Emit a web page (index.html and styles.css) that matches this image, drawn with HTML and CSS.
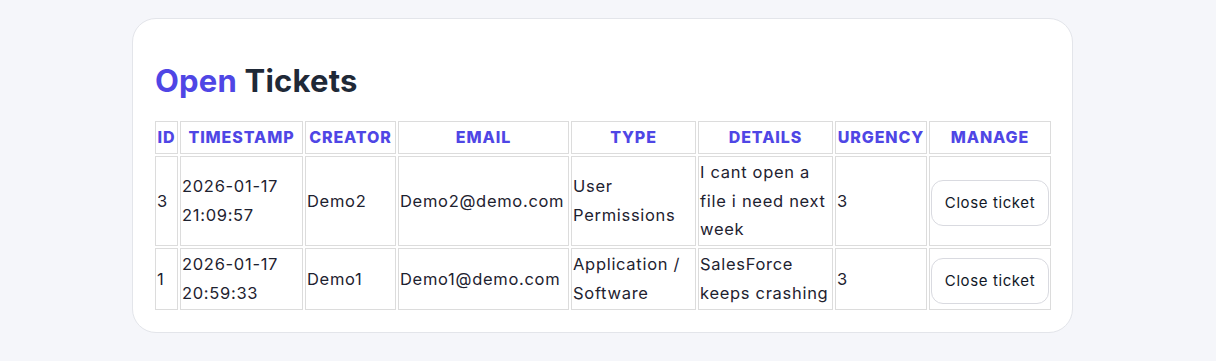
FILE: index.html
```html
<!DOCTYPE html>
<html lang="en">
<head>
    <meta charset="UTF-8">
    <meta name="viewport" content="width=device-width, initial-scale=1.0">
    <title>Open Tickets</title>
    <link rel="stylesheet" href="styles.css">
</head>
<body>
    <div class="container">
        <div class="tickets-card">
            <h1 class="page-title"><span class="accent">Open</span> Tickets</h1>

            <table class="tickets-table">
                <colgroup>
                    <col class="col-id">
                    <col class="col-time">
                    <col class="col-creator">
                    <col class="col-email">
                    <col class="col-type">
                    <col class="col-details">
                    <col class="col-urgency">
                    <col class="col-manage">
                </colgroup>
                <thead>
                    <tr>
                        <th>ID</th>
                        <th>Timestamp</th>
                        <th>Creator</th>
                        <th>Email</th>
                        <th>Type</th>
                        <th>Details</th>
                        <th>Urgency</th>
                        <th>Manage</th>
                    </tr>
                </thead>
                <tbody>
                    <tr>
                        <td>3</td>
                        <td>2026-01-17 21:09:57</td>
                        <td>Demo2</td>
                        <td>Demo2@demo.com</td>
                        <td>User Permissions</td>
                        <td>I cant open a file i need next week</td>
                        <td>3</td>
                        <td><button class="close-btn">Close ticket</button></td>
                    </tr>
                    <tr>
                        <td>1</td>
                        <td>2026-01-17 20:59:33</td>
                        <td>Demo1</td>
                        <td>Demo1@demo.com</td>
                        <td>Application / Software</td>
                        <td>SalesForce keeps crashing</td>
                        <td>3</td>
                        <td><button class="close-btn">Close ticket</button></td>
                    </tr>
                </tbody>
            </table>
        </div>
    </div>
</body>
</html>
```

FILE: styles.css
```css
body {
    margin: 0;
    font-family: Inter, "Noto Sans", sans-serif;
    background: #f5f6fa;
    color: #1e2230;
    min-height: 100vh;
}

.container {
    padding: 18px 0 0 132px;
}

.tickets-card {
    width: 941px;
    box-sizing: border-box;
    background: white;
    border: 1px solid #e3e5ea;
    border-radius: 24px;
    padding: 22px;
}

.page-title {
    margin: 21px 0 22px;
    font-size: 31px;
    font-weight: 700;
    letter-spacing: 0.2px;
    color: #1f2937;
}

.page-title .accent {
    color: #4f46e5;
}

.tickets-table {
    table-layout: fixed;
    border-spacing: 2px;
    margin: -2px;
    width: calc(100% + 4px);
    font-size: 16.5px;
    letter-spacing: 0.7px;
    line-height: 28.8px;
}

.col-id { width: 23px; }
.col-time { width: 123px; }
.col-creator { width: 91px; }
.col-email { width: 171px; }
.col-type { width: 125px; }
.col-details { width: 135px; }
.col-urgency { width: 92px; }
.col-manage { width: 122px; }

.tickets-table th,
.tickets-table td {
    border: 1px solid #dcdcdc;
    padding: 1px;
}

.tickets-table th {
    color: #4f46e5;
    font-weight: 800;
    text-transform: uppercase;
    font-size: 16px;
    letter-spacing: 0.9px;
}

.tickets-table td {
    text-align: left;
}

.close-btn {
    font-family: inherit;
    font-size: 15px;
    letter-spacing: 0.6px;
    color: #111827;
    background: white;
    border: 1px solid #d9dae0;
    border-radius: 12px;
    padding: 0 10px;
    margin-top: 4px;
    height: 46px;
    width: 118px;
    cursor: pointer;
}

.close-btn:hover {
    background: #f3f4f6;
}
```
